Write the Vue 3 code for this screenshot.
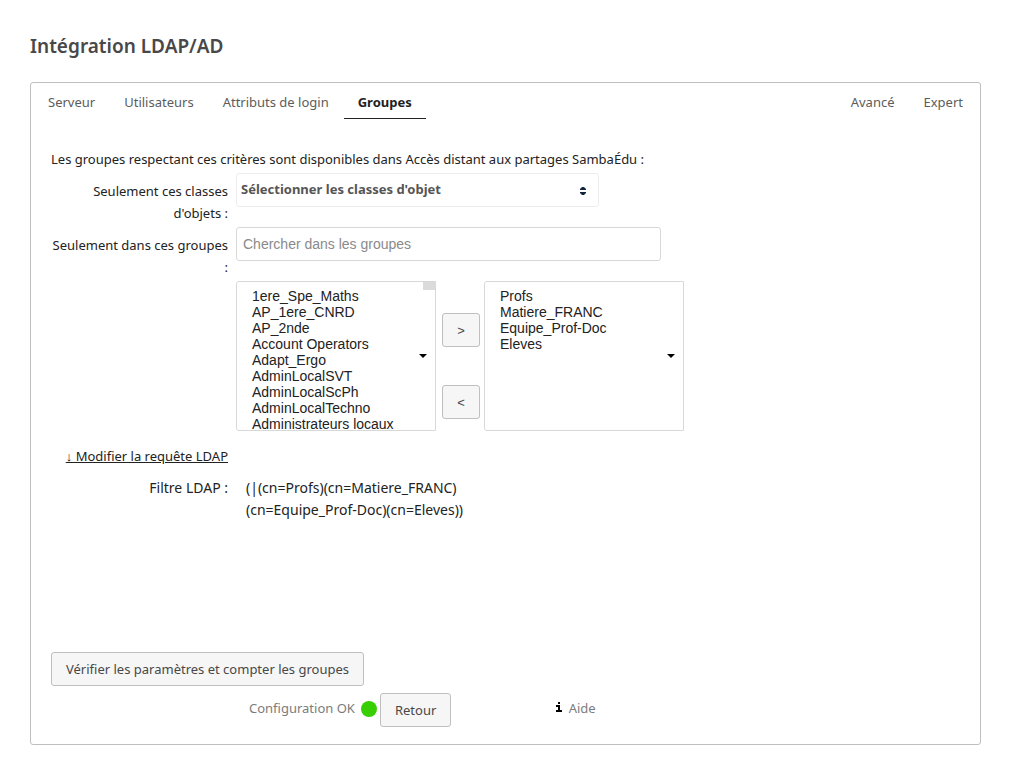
<script setup>
import { ref } from 'vue'

const tabs = ['Serveur', 'Utilisateurs', 'Attributs de login', 'Groupes']
const extraTabs = ['Avancé', 'Expert']
const active = ref('Groupes')
const search = ref('')

const available = [
  '1ere_Spe_Maths',
  'AP_1ere_CNRD',
  'AP_2nde',
  'Account Operators',
  'Adapt_Ergo',
  'AdminLocalSVT',
  'AdminLocalScPh',
  'AdminLocalTechno',
  'Administrateurs locaux',
]
const selected = ['Profs', 'Matiere_FRANC', 'Equipe_Prof-Doc', 'Eleves']
</script>

<template>
  <main class="page">
    <h2 class="title">Intégration LDAP/AD</h2>
    <form class="panel" @submit.prevent>
      <nav class="tabs">
        <a
          v-for="t in tabs"
          :key="t"
          href="#"
          class="tab"
          :class="{ active: t === active }"
          @click.prevent="active = t"
        >{{ t }}</a>
        <span class="spacer"></span>
        <a
          v-for="t in extraTabs"
          :key="t"
          href="#"
          class="tab"
          :class="{ active: t === active }"
          @click.prevent="active = t"
        >{{ t }}</a>
      </nav>

      <section class="content">
        <p class="intro">Les groupes respectant ces critères sont disponibles dans Accès distant aux partages SambaÉdu :</p>

        <div class="row">
          <label class="label" for="classes">Seulement ces classes d'objets :</label>
          <div class="wrap classes">
            <select id="classes" class="dropdown">
              <option>Sélectionner les classes d'objet</option>
            </select>
            <svg class="sort" viewBox="0 0 6 8" width="6" height="8" aria-hidden="true">
              <path d="M2 0H4L6 2V3H0V2zM0 5H6V6L4 8H2L0 6z" fill="#14253f" />
            </svg>
          </div>
        </div>

        <div class="row search-row">
          <label class="label" for="search">Seulement dans ces groupes :</label>
          <input id="search" v-model="search" class="search" type="text" placeholder="Chercher dans les groupes" />
        </div>

        <div class="row lists">
          <span class="label"></span>
          <div class="wrap">
            <select class="list" multiple aria-label="Groupes disponibles">
              <option v-for="g in available" :key="g">{{ g }}</option>
            </select>
            <span class="thumb"></span>
            <svg class="caret" viewBox="0 0 8 4" width="8" height="4" aria-hidden="true"><path d="M0 0H8L4 4z" /></svg>
          </div>
          <div class="moves">
            <button type="button" class="btn move">&gt;</button>
            <button type="button" class="btn move">&lt;</button>
          </div>
          <div class="wrap">
            <select class="list" multiple aria-label="Groupes sélectionnés">
              <option v-for="g in selected" :key="g">{{ g }}</option>
            </select>
            <svg class="caret" viewBox="0 0 8 4" width="8" height="4" aria-hidden="true"><path d="M0 0H8L4 4z" /></svg>
          </div>
        </div>

        <div class="row edit-row">
          <a href="#" class="label edit" @click.prevent>↓ Modifier la requête LDAP</a>
        </div>

        <div class="row filter-row">
          <span class="label">Filtre LDAP :</span>
          <div class="filter">(|(cn=Profs)(cn=Matiere_FRANC)<br />(cn=Equipe_Prof-Doc)(cn=Eleves))</div>
        </div>

        <button type="button" class="btn verify">Vérifier les paramètres et compter les groupes</button>

        <footer class="footer">
          <span class="status">Configuration OK</span>
          <span class="dot"></span>
          <button type="button" class="btn">Retour</button>
          <a href="#" class="help" @click.prevent>
            <svg viewBox="0 0 6 11" width="6" height="11" aria-hidden="true">
              <path d="M2 0H4V2H2zM0 3H4V8H6V10H0V8H2V5H0z" />
            </svg>
            Aide
          </a>
        </footer>
      </section>
    </form>
  </main>
</template>

<style>
body {
  margin: 0;
  background: #fff;
}
</style>

<style scoped>
* {
  box-sizing: border-box;
}
.page {
  padding: 30px;
  font: 13px/22px "Noto Sans", "Open Sans", sans-serif;
  color: #222;
}
.title {
  margin: 0 0 20px;
  font-size: 19px;
  line-height: 32px;
  font-weight: 600;
  color: #484848;
}
.panel {
  border: 1px solid #bfbfbf;
  border-radius: 3px;
}
.tabs {
  display: flex;
  gap: 1px;
  padding: 0 3px;
}
.tab {
  padding: 8px 14px 5px;
  border-bottom: 1px solid transparent;
  color: #5c5c5c;
  text-decoration: none;
}
.tab.active {
  color: #222;
  font-weight: 700;
  border-color: #222;
}
.spacer {
  flex: 1;
}
.content {
  padding: 29px 20px 17px;
}
.intro {
  margin: 0 0 3px;
}
.row {
  display: flex;
}
.label {
  flex: none;
  width: 177px;
  margin-right: 8px;
  text-align: right;
}
.row > label.label {
  padding-top: 7px;
}
.wrap {
  position: relative;
}
.classes {
  width: 363px;
}
.dropdown {
  display: block;
  appearance: none;
  width: 100%;
  height: 34px;
  padding: 0 4px 2px;
  border: 1px solid #ededed;
  border-radius: 3px;
  background: #fff;
  font: 700 13px/22px "Noto Sans", "Open Sans", sans-serif;
  color: #555;
}
.sort {
  position: absolute;
  right: 13px;
  top: 14px;
}
.search-row {
  margin-top: 3px;
}
.search {
  width: 425px;
  height: 34px;
  padding: 0 6px;
  border: 1px solid #d8d8d8;
  border-radius: 3px;
  font: 14px "Liberation Sans", Arial, sans-serif;
  color: #222;
}
.search::placeholder {
  color: #8a8a8a;
}
.lists {
  margin-top: 3px;
}
.list {
  display: block;
  appearance: none;
  width: 200px;
  height: 150px;
  margin: 0;
  padding: 6px 15px 0;
  border: 1px solid #d8d8d8;
  border-radius: 3px 0 0 3px;
  background: #fff;
  overflow: hidden;
  scrollbar-width: none;
  font: 14px/16px "Liberation Sans", Arial, sans-serif;
  color: #222;
}
.list option {
  height: 16px;
  min-height: 16px;
  padding: 0;
  line-height: 16px;
}
.thumb {
  position: absolute;
  top: 1px;
  right: 1px;
  width: 12px;
  height: 8px;
  background: #dbdbdb;
}
.caret {
  position: absolute;
  right: 9px;
  top: 73px;
}
.moves {
  display: flex;
  flex-direction: column;
  gap: 38px;
  padding: 32px 4px 0 6px;
}
.btn {
  height: 34px;
  padding: 0 14px;
  border: 1px solid #bfbfbf;
  border-radius: 3px;
  background: #f6f6f6;
  font: 13px/22px "Noto Sans", "Open Sans", sans-serif;
  color: #484848;
}
.move {
  width: 38px;
  padding: 0;
  font: 13px "Liberation Sans", Arial, sans-serif;
}
.edit-row {
  margin-top: 14px;
}
.edit {
  color: #222;
  text-decoration: underline;
}
.filter-row {
  margin-top: 10px;
  font-size: 14px;
}
.filter {
  padding-left: 10px;
}
.verify {
  display: block;
  margin-top: 131px;
}
.footer {
  display: flex;
  margin: 7px 0 0 198px;
  color: #7c7c7c;
}
.status {
  padding-top: 4px;
}
.dot {
  width: 16px;
  height: 16px;
  margin: 8px 3px 0 6px;
  border-radius: 50%;
  background: #37ce02;
}
.help {
  margin-left: 105px;
  padding-top: 4px;
  color: #7c7c7c;
  text-decoration: none;
}
.help svg {
  margin-right: 3px;
}
</style>
